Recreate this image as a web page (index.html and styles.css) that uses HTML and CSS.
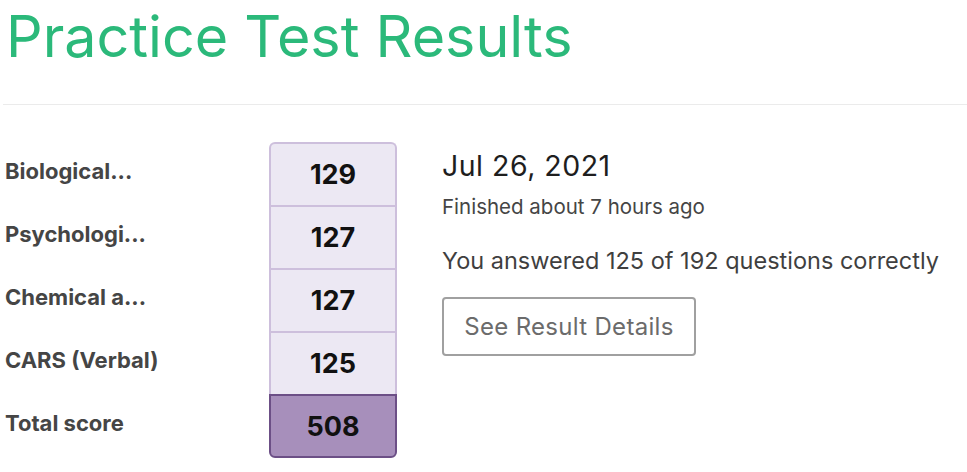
FILE: index.html
```html
<!DOCTYPE html>
<html lang="en">
<head>
<meta charset="utf-8">
<title>Practice Test Results</title>
<link rel="stylesheet" href="styles.css">
</head>
<body>
<div class="page">
  <h1 class="title">Practice Test Results</h1>
  <hr class="divider">
  <div class="results">
    <div class="labels">
      <div class="label">Biological...</div>
      <div class="label">Psychologi...</div>
      <div class="label">Chemical a...</div>
      <div class="label">CARS (Verbal)</div>
      <div class="label">Total score</div>
    </div>
    <div class="scores">
      <div class="score">129</div>
      <div class="score">127</div>
      <div class="score">127</div>
      <div class="score">125</div>
      <div class="score total">508</div>
    </div>
    <div class="summary">
      <div class="date">Jul 26, 2021</div>
      <div class="finished">Finished about 7 hours ago</div>
      <div class="answered">You answered 125 of 192 questions correctly</div>
      <button class="details-btn" type="button">See Result Details</button>
    </div>
  </div>
</div>
</body>
</html>
```

FILE: styles.css
```css
html, body {
  margin: 0;
  padding: 0;
  background: #ffffff;
}
body {
  font-family: "Inter", "Noto Sans", sans-serif;
}
.page {
  padding: 0 0 0 3px;
}
.title {
  margin: 0;
  padding: 3px 0 0 3px;
  height: 104px;
  box-sizing: border-box;
  font-size: 57.4px;
  line-height: 66px;
  font-weight: 400;
  color: #2bb97a;
}
.divider {
  margin: 0;
  border: 0;
  border-top: 1px solid #ebebeb;
  height: 0;
}
.results {
  display: flex;
  align-items: flex-start;
  padding-top: 37px;
}
.labels {
  width: 266px;
  display: flex;
  flex-direction: column;
}
.label {
  height: 63px;
  box-sizing: border-box;
  padding: 0 0 6px 2px;
  display: flex;
  align-items: center;
  font-size: 22px;
  font-weight: 700;
  color: #454545;
}
.scores {
  width: 128px;
  display: flex;
  flex-direction: column;
}
.score {
  height: 63px;
  box-sizing: border-box;
  display: flex;
  align-items: center;
  justify-content: center;
  background: #ece8f3;
  border: 2px solid #cdbfdc;
  border-bottom: 0;
  font-size: 27px;
  font-weight: 700;
  color: #111111;
}
.score:first-child {
  border-radius: 6px 6px 0 0;
}
.score.total {
  height: 64px;
  background: #a78fbb;
  border: 2px solid #6c4f86;
  border-radius: 0 0 6px 6px;
}
.summary {
  padding-left: 45px;
  padding-top: 7px;
  display: flex;
  flex-direction: column;
  align-items: flex-start;
}
.date {
  font-size: 28.5px;
  line-height: 34px;
  letter-spacing: 0.5px;
  color: #1e1e1e;
}
.finished {
  margin-top: 11px;
  font-size: 20.5px;
  line-height: 26px;
  color: #454545;
}
.answered {
  margin-top: 27px;
  font-size: 23.5px;
  line-height: 28px;
  color: #3f3f3f;
}
.details-btn {
  margin-top: 22px;
  width: 254px;
  height: 59px;
  background: #ffffff;
  border: 2px solid #a0a0a0;
  border-radius: 4px;
  font-family: inherit;
  font-size: 24px;
  letter-spacing: 0.3px;
  color: #6b6b6b;
  cursor: pointer;
}
```
